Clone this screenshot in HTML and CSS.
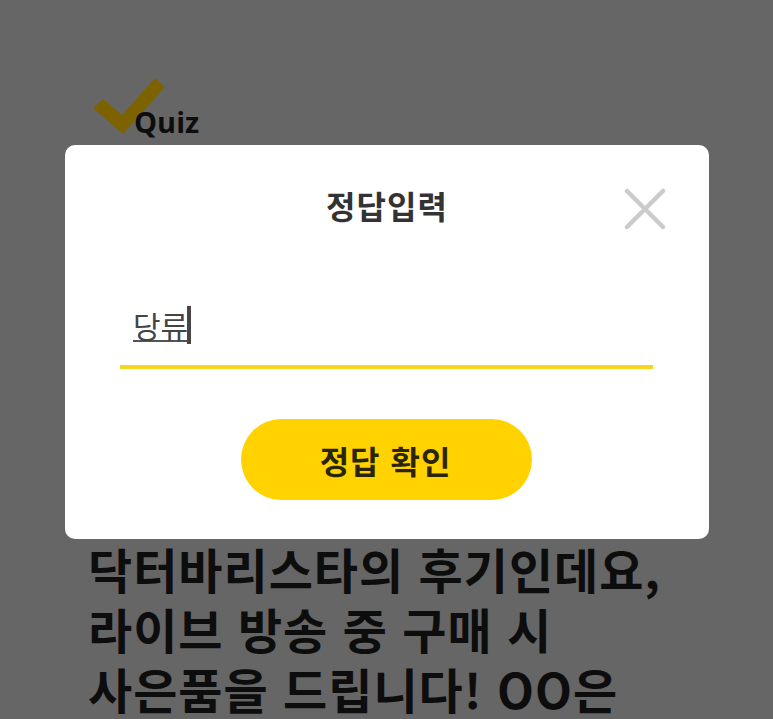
FILE: index.html
```html
<!DOCTYPE html>
<html lang="ko">
<head>
<meta charset="utf-8">
<title>Quiz</title>
<link rel="stylesheet" href="styles.css">
</head>
<body>
<main class="page">
  <div class="quiz-head">
    <svg class="check" width="78" height="62" viewBox="0 0 78 62" aria-hidden="true"><polygon points="3,33 13,24 32,40 65,3 75,12 33,59" fill="#7c6300"/></svg>
    <span class="quiz-label">Quiz</span>
  </div>
  <p class="question">닥터바리스타의 후기인데요,<br>라이브 방송 중 구매 시<br>사은품을 드립니다! OO은</p>
</main>
<section class="modal">
  <header class="modal-head">
    <h2 class="modal-title">정답입력</h2>
    <button class="close" type="button" aria-label="닫기">
      <svg width="42" height="42" viewBox="0 0 42 42" aria-hidden="true"><path d="M3 3 L39 39 M39 3 L3 39" stroke="#cbcbcb" stroke-width="4.5" stroke-linecap="round"/></svg>
    </button>
  </header>
  <div class="field"><span class="typed">당류</span><span class="caret"></span></div>
  <button class="submit" type="button"><span class="submit-label">정답 확인</span></button>
</section>
</body>
</html>
```
FILE: styles.css
```css
* { box-sizing: border-box; }
html, body { margin: 0; height: 719px; overflow: hidden; }
body {
  position: relative;
  background: #666666;
  font-family: "Noto Sans CJK KR", "Noto Sans", sans-serif;
}
.page { padding: 76px 0 0 88px; }
.quiz-head { display: flex; align-items: flex-end; height: 64px; }
.check { margin: 0 0 3px 2px; flex: none; }
.quiz-label {
  margin-left: -34px;
  font-family: "Open Sans", sans-serif;
  font-size: 29px;
  font-weight: 700;
  line-height: 36px;
  color: #0d0d0d;
}
.question {
  margin: 398px 0 0;
  font-size: 48px;
  font-weight: 700;
  line-height: 60px;
  letter-spacing: 1px;
  color: #0d0d0d;
  white-space: nowrap;
}
.modal {
  position: absolute;
  left: 65px;
  top: 145px;
  width: 644px;
  height: 394px;
  padding: 34px 55px 0;
  display: flex;
  flex-direction: column;
  align-items: center;
  background: #fff;
  border-radius: 10px;
}
.modal-head { position: relative; width: 100%; display: flex; justify-content: center; }
.modal-title {
  margin: 0;
  font-size: 32px;
  font-weight: 700;
  line-height: 52px;
  letter-spacing: 1px;
  color: #333;
}
.close {
  position: absolute;
  right: -12px;
  top: 9px;
  padding: 0;
  border: 0;
  background: none;
  display: flex;
}
.field {
  width: 533px;
  height: 73px;
  margin: 65px 1px 0 0;
  padding: 0 0 11px 13px;
  display: flex;
  align-items: center;
  border-bottom: 4px solid #f7d61f;
}
.typed {
  font-size: 30px;
  line-height: 34px;
  color: #444;
  border-bottom: 2px solid #555;
  height: 34px;
}
.caret { width: 4px; height: 38px; background: #4a4444; margin-left: -1px; }
.submit {
  width: 291px;
  height: 81px;
  margin: 50px 1px 0 0;
  border: 0;
  border-radius: 41px;
  background: #ffd200;
  color: #2b2508;
  font-family: inherit;
  font-size: 32px;
  font-weight: 700;
  letter-spacing: 1px;
}
.submit-label { position: relative; left: -1px; }
```
